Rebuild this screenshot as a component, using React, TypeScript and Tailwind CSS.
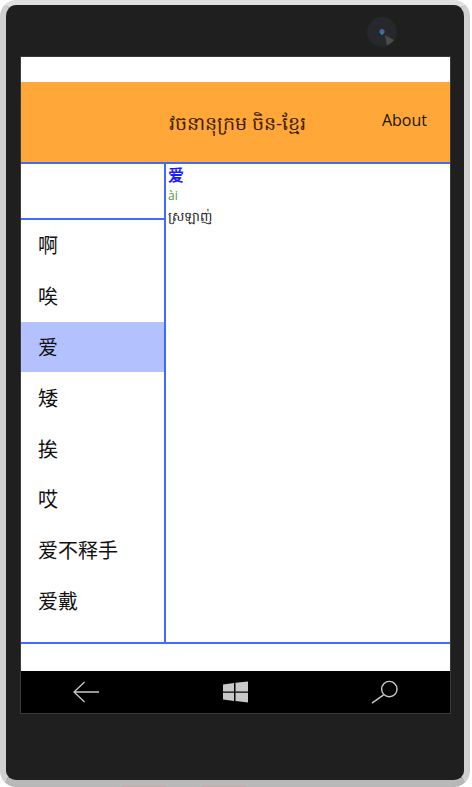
const words = ['啊', '唉', '爱', '矮', '挨', '哎', '爱不释手', '爱戴'];

function App() {
  return (
    <div className="relative h-[787px] w-[472px] overflow-hidden bg-white font-['Open_Sans','Noto_Sans_CJK_SC',sans-serif]">
      <div className="h-[787px] w-[470px] rounded-[16px] border-x-[6px] border-t-[5px] border-b-[7px] border-t-[#e0e0e0] border-x-[#d0d0d0] border-b-[#b8b8b8] bg-[#1f1f1f] pl-[15px] pr-[14px] pt-[52px]">
        <div className="relative">
          <svg className="absolute -top-[40px] left-[346px]" width="30" height="30" viewBox="0 0 30 30">
            <circle cx="15" cy="15" r="15" fill="#26282c" />
            <path d="M18 18 27 23A15 15 0 0 1 20 28.5Z" fill="#4a4b4f" />
            <circle cx="15" cy="14.5" r="2.6" fill="#4a5fa8" />
            <circle cx="15" cy="16.5" r="1.2" fill="#1f9a80" />
          </svg>
        </div>
        <div className="shadow-[0_0_0_1px_#3a3a3a]">
          <div className="flex h-[614px] flex-col bg-white">
            <div className="h-[25px]" />
            <div className="flex h-[80px] items-center bg-[#ffa839]">
              <div className="flex-1 pl-[148px] pt-[2px] text-[19px] font-normal text-[#3f1e00]">វចនានុក្រម ចិន-ខ្មែរ</div>
              <div className="pr-[23px] pb-[4px] text-[16px] text-[#1a1206]">About</div>
            </div>
            <div className="flex h-[482px] border-y-2 border-[#3f6bff]">
              <div className="flex w-[145px] flex-col border-r-2 border-[#3f6bff]">
                <div className="h-[56px] shrink-0 border-b-2 border-[#3f6bff]" />
                <div className="flex flex-col">
                  {words.map((w, i) => (
                    <div key={w} className={`flex h-[50.8px] items-center pl-[17px] pt-[2px] text-[20px] text-[#111] ${i === 2 ? 'bg-[#b3c2ff]' : ''}`}>
                      {w}
                    </div>
                  ))}
                </div>
              </div>
              <div className="flex-1 pl-[2px] pt-[1px]">
                <div className="text-[16px] leading-[20px] font-bold text-[#1a1aff]">爱</div>
                <div className="pt-[1px] text-[12px] leading-[20px] text-[#4a9a3a]">ài</div>
                <div className="text-[13px] leading-[21px] text-[#222]">ស្រឡាញ់</div>
              </div>
            </div>
          </div>
          <div className="flex h-[42px] items-center justify-between bg-black px-[52px]">
            <svg width="26" height="22" viewBox="0 0 26 22" fill="none" stroke="#c8c8c8" strokeWidth="1.3">
              <path d="M26 11H1M11.5 1 1 11l10.5 10" />
            </svg>
            <svg width="25" height="22" viewBox="0 0 26 22" fill="#c8c8c8">
              <path d="M0 3.2 11.5 1.6v8.8H0zM13 1.4 26 0v10.4H13zM0 11.8h11.5v8.6L0 18.8zM13 11.8h13V22l-13-1.6z" />
            </svg>
            <svg width="27" height="24" viewBox="0 0 28 24" fill="none" stroke="#c8c8c8" strokeWidth="1.5">
              <circle cx="19" cy="9" r="8" />
              <path d="M13 15 1 23.5" />
            </svg>
          </div>
        </div>
      </div>
      <div className="absolute bottom-0 left-[122px] h-[1px] w-[44px] bg-[#c4a8ae]" />
      <div className="absolute bottom-0 left-[202px] h-[1px] w-[44px] bg-[#c4a8ae]" />
    </div>
  );
}

export default App;
